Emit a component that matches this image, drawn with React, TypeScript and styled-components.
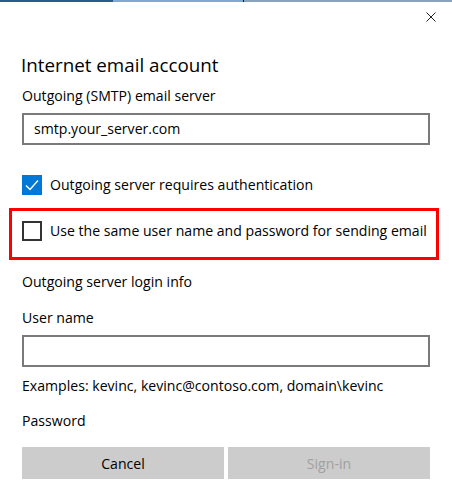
import React from 'react';
import styled, { createGlobalStyle } from 'styled-components';

const GlobalStyle = createGlobalStyle`
  html, body {
    margin: 0;
    padding: 0;
    background: #ffffff;
  }
  body {
    font-family: 'Segoe UI', 'Open Sans', 'Noto Sans', sans-serif;
    color: #000000;
    -webkit-font-smoothing: antialiased;
  }
  * {
    box-sizing: border-box;
  }
`;

const Page = styled.div`
  width: 452px;
  height: 486px;
  overflow: hidden;
  background: #ffffff;
`;

const TopStrip = styled.div`
  display: flex;
  height: 2px;
`;

const StripPart = styled.div<{ $width: string; $color: string }>`
  flex: 0 0 ${(p) => p.$width};
  background: ${(p) => p.$color};
`;

const Header = styled.div`
  display: flex;
  justify-content: flex-end;
  height: 32px;
  padding: 10px 16px 0 0;
`;

const CloseButton = styled.button`
  width: 10px;
  height: 10px;
  padding: 0;
  border: none;
  background: transparent;
  display: flex;
`;

const Body = styled.div`
  display: flex;
  flex-direction: column;
  padding: 0 22px;
`;

const Title = styled.h1`
  margin: 17px 0 0 -1px;
  font-size: 18.8px;
  font-weight: 400;
  line-height: 28px;
`;

const Label = styled.div<{ $gap: number }>`
  margin-top: ${(p) => p.$gap}px;
  font-size: 14.1px;
  line-height: 20px;
`;

const TextBox = styled.div<{ $gap: number }>`
  margin-top: ${(p) => p.$gap}px;
  height: 32px;
  border: 2px solid #7a7a7a;
  padding: 0 10px;
  font-size: 14.1px;
  line-height: 28px;
`;

const CheckRow = styled.label<{ $gap?: number }>`
  display: flex;
  align-items: center;
  gap: 8px;
  margin-top: ${(p) => p.$gap ?? 0}px;
  font-size: 14.1px;
  line-height: 20px;
  white-space: nowrap;
`;

const Box = styled.span<{ $checked?: boolean }>`
  flex: 0 0 20px;
  width: 20px;
  height: 20px;
  display: flex;
  align-items: center;
  justify-content: center;
  background: ${(p) => (p.$checked ? '#0078d7' : '#ffffff')};
  border: ${(p) => (p.$checked ? 'none' : '2px solid #333333')};
`;

const Highlight = styled.div`
  margin: 13px 0 0 -13px;
  width: 430px;
  border: 3px solid #ff0000;
  padding: 10px 0 16px 10px;
`;

const ButtonRow = styled.div`
  display: grid;
  grid-template-columns: 1fr 1fr;
  gap: 4px;
  margin-top: 16px;
`;

const Button = styled.button<{ $disabled?: boolean }>`
  height: 32px;
  border: none;
  padding: 0;
  background: #cccccc;
  font-family: inherit;
  font-size: 14.1px;
  color: ${(p) => (p.$disabled ? '#a0a0a0' : '#000000')};
`;

function App() {
  return (
    <Page>
      <GlobalStyle />
      <TopStrip>
        <StripPart $width="113px" $color="#245d92" />
        <StripPart $width="130px" $color="#7fa9d1" />
        <StripPart $width="1px" $color="#111111" />
        <StripPart $width="208px" $color="#8aa3bb" />
      </TopStrip>
      <Header>
        <CloseButton aria-label="Close">
          <svg width="10" height="10" viewBox="0 0 10 10">
            <path d="M0.5 0.5 L9.5 9.5 M9.5 0.5 L0.5 9.5" stroke="#222" strokeWidth="1" />
          </svg>
        </CloseButton>
      </Header>
      <Body>
        <Title>Internet email account</Title>
        <Label $gap={7}>Outgoing (SMTP) email server</Label>
        <TextBox $gap={7}>smtp.your_server.com</TextBox>
        <CheckRow $gap={30}>
          <Box $checked>
            <svg width="14" height="12" viewBox="0 0 14 12">
              <path d="M1 6.5 L5 10.5 L13 1.5" fill="none" stroke="#ffffff" strokeWidth="1.4" />
            </svg>
          </Box>
          Outgoing server requires authentication
        </CheckRow>
        <Highlight>
          <CheckRow>
            <Box />
            Use the same user name and password for sending email
          </CheckRow>
        </Highlight>
        <Label $gap={12}>Outgoing server login info</Label>
        <Label $gap={16}>User name</Label>
        <TextBox $gap={7} />
        <Label $gap={9}>Examples: kevinc, kevinc@contoso.com, domain\kevinc</Label>
        <Label $gap={15}>Password</Label>
        <ButtonRow>
          <Button>Cancel</Button>
          <Button $disabled>Sign-in</Button>
        </ButtonRow>
      </Body>
    </Page>
  );
}

export default App;
